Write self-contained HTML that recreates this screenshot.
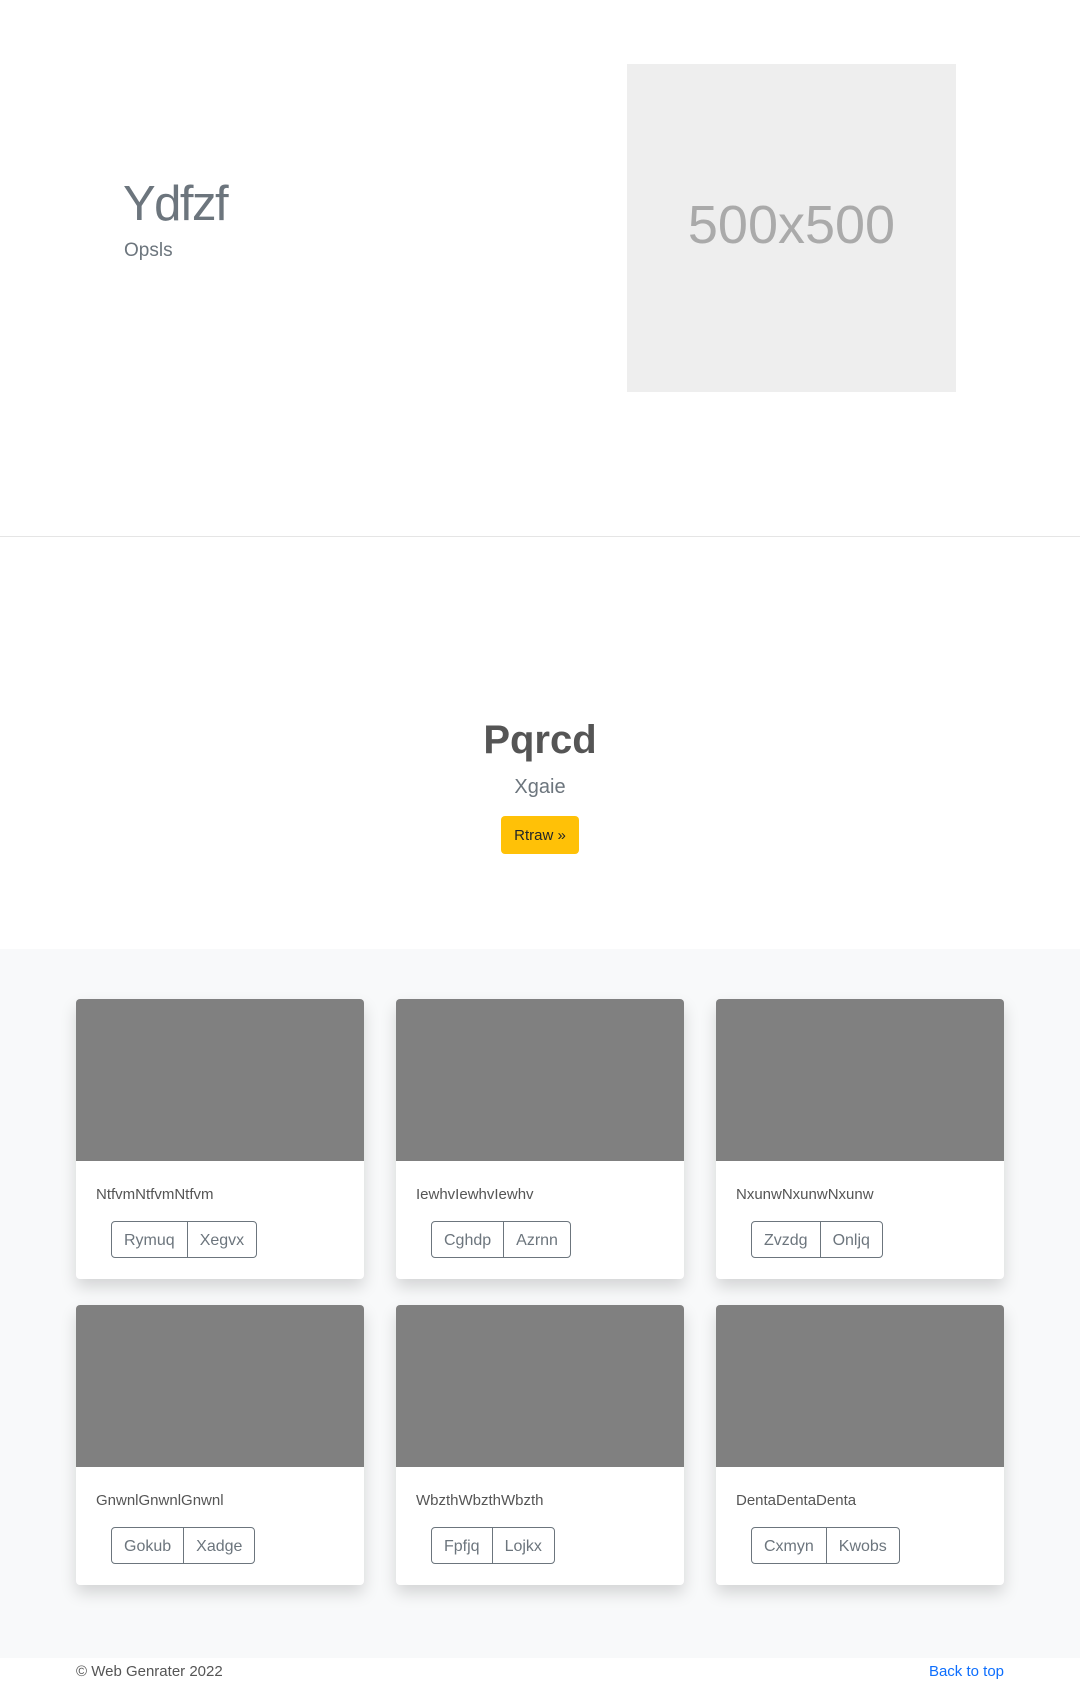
<!DOCTYPE html>
<html><head><meta charset="utf-8"><style>
*{box-sizing:border-box;margin:0;padding:0}
body{width:1080px;height:1682px;background:#fff;font-family:"Liberation Sans",sans-serif;position:relative;overflow:hidden;color:#212529}
.abs{position:absolute}
.hero-t{left:123px;top:176px;font-size:49px;font-weight:300;color:#6c757d;letter-spacing:-1.5px}
.hero-s{left:124px;top:240px;font-size:19px;font-weight:300;color:#6c757d}
.ph{left:627px;top:64px;width:329px;height:328px;background:#eee;color:#aaa;font-size:54px;display:flex;align-items:center;justify-content:center;padding-bottom:6px}
.hr{left:0;top:536px;width:1080px;height:1px;background:#e5e5e5}
.t2{left:0;width:1080px;text-align:center}
.btn{left:501px;top:816px;width:78px;height:38px;background:#ffc107;border-radius:4px;font-size:15px;display:flex;align-items:center;justify-content:center;color:#212529}
.gray{left:0;top:949px;width:1080px;height:709px;background:#f8f9fa}
.card{position:absolute;width:288px;height:280px;background:#fff;border-radius:4px;box-shadow:0 8px 16px rgba(0,0,0,.15);overflow:hidden}
.card .img{height:162px;background:#808080}
.card .tx{position:absolute;left:20px;top:187px;font-size:15px;color:#555}
.grp{position:absolute;left:35px;top:222px;display:flex;height:37px;border:1px solid #6c757d;border-radius:4px}
.grp span{display:flex;align-items:center;padding:2px 12px 0;font-size:16px;color:#6c757d}
.grp span+span{border-left:1px solid #6c757d}
.foot{top:1663px;font-size:15px;color:#555}
</style></head><body>
<div class="abs hero-t">Ydfzf</div>
<div class="abs hero-s">Opsls</div>
<div class="abs ph">500x500</div>
<div class="abs hr"></div>
<div class="abs t2" style="top:718px;font-size:40px;font-weight:bold;color:#555">Pqrcd</div>
<div class="abs t2" style="top:776px;font-size:20px;font-weight:300;color:#6c757d">Xgaie</div>
<div class="abs btn">Rtraw »</div>
<div class="abs gray"></div>

<div class="card" style="left:76px;top:999px"><div class="img"></div><div class="tx">NtfvmNtfvmNtfvm</div><div class="grp"><span>Rymuq</span><span>Xegvx</span></div></div>
<div class="card" style="left:396px;top:999px"><div class="img"></div><div class="tx">IewhvIewhvIewhv</div><div class="grp"><span>Cghdp</span><span>Azrnn</span></div></div>
<div class="card" style="left:716px;top:999px"><div class="img"></div><div class="tx">NxunwNxunwNxunw</div><div class="grp"><span>Zvzdg</span><span>Onljq</span></div></div>
<div class="card" style="left:76px;top:1305px"><div class="img"></div><div class="tx">GnwnlGnwnlGnwnl</div><div class="grp"><span>Gokub</span><span>Xadge</span></div></div>
<div class="card" style="left:396px;top:1305px"><div class="img"></div><div class="tx">WbzthWbzthWbzth</div><div class="grp"><span>Fpfjq</span><span>Lojkx</span></div></div>
<div class="card" style="left:716px;top:1305px"><div class="img"></div><div class="tx">DentaDentaDenta</div><div class="grp"><span>Cxmyn</span><span>Kwobs</span></div></div>

<div class="abs foot" style="left:76px">© Web Genrater 2022</div>
<div class="abs foot" style="right:76px;color:#0d6efd">Back to top</div>
</body></html>
